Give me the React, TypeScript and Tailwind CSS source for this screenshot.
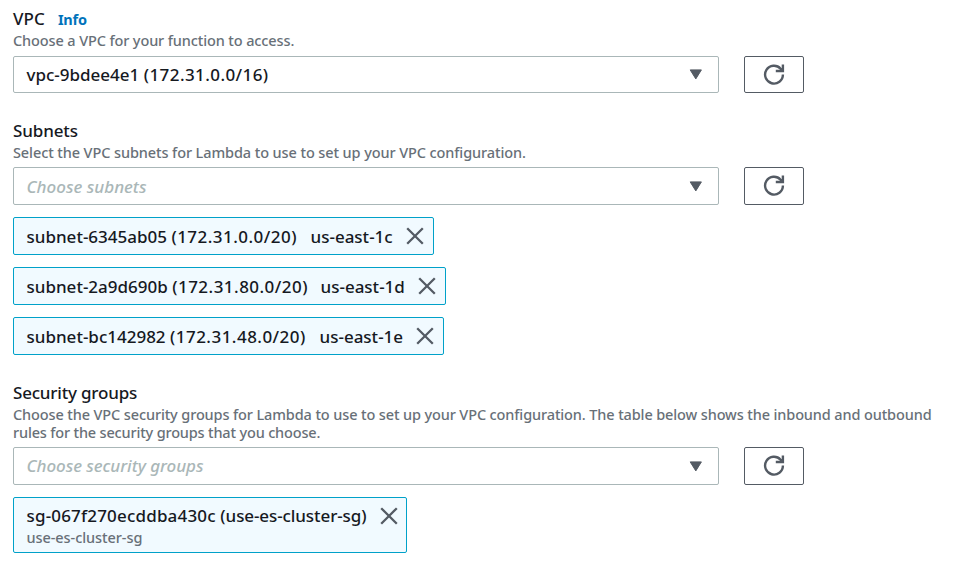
import type { ReactNode } from "react";

function RefreshButton() {
  return (
    <button
      aria-label="Refresh"
      className="flex h-full w-[60px] items-center justify-center rounded-[2px] border border-[#545b64] bg-white"
    >
      <svg width="22" height="22" viewBox="0 0 22 22" fill="none" stroke="#545b64" strokeWidth="2.4">
        <path d="M19.9 10.6A8.9 8.9 0 1 1 17.6 4.7L19 6.3" />
        <path d="M19.9 .6V7H12.8" />
        <path d="M19.9 3V7H15.5Z" fill="#545b64" stroke="none" />
      </svg>
    </button>
  );
}

function SelectRow({ children, height }: { children: ReactNode; height: string }) {
  return (
    <div className={`flex gap-[25px] ${height}`}>
      <div className="flex w-[706px] items-center justify-between rounded-[2px] border border-[#aab7b8] bg-white pr-4 pl-[12.5px] text-[17px]">
        {children}
        <svg width="13" height="11" viewBox="0 0 13 11" fill="#545b64" stroke="#545b64" strokeLinejoin="round">
          <path d="M1.2.9H12.4L6.8 9.9Z" />
        </svg>
      </div>
      <RefreshButton />
    </div>
  );
}

function CloseIcon() {
  return (
    <svg className="shrink-0" width="18" height="18" viewBox="0 0 18 18" stroke="#545b64" strokeWidth="2.3">
      <path d="M1.2 1.2 16.8 16.8M16.8 1.2 1.2 16.8" />
    </svg>
  );
}

const subnets = [
  { id: "subnet-6345ab05", cidr: "(172.31.0.0/20)", zone: "us-east-1c", box: "w-[421px]", text: "w-[284px]" },
  { id: "subnet-2a9d690b", cidr: "(172.31.80.0/20)", zone: "us-east-1d", box: "w-[433px]", text: "w-[294px]" },
  { id: "subnet-bc142982", cidr: "(172.31.48.0/20)", zone: "us-east-1e", box: "w-[431px]", text: "w-[293px]" },
];

export default function App() {
  return (
    <main className="h-[570px] w-[968px] overflow-hidden bg-white pt-2 pl-[13px] font-['Noto_Sans',sans-serif] font-medium whitespace-nowrap text-[#16191f]">
      <section className="h-[112px]">
        <h2 className="flex h-[22px] items-center gap-[13px] text-[17px] leading-[22px]">
          <span className="tracking-[0.1px]">VPC</span>
          <a className="text-[14.5px] font-bold tracking-[-0.2px] text-[#0073bb]">Info</a>
        </h2>
        <p className="h-[26px] text-[14.5px] leading-[20px] tracking-[-0.12px] text-[#687078]">
          Choose a VPC for your function to access.
        </p>
        <SelectRow height="h-[37px]">
          <span>
            vpc-9bdee4e1 <span className="tracking-[0.42px]">(172.31.0.0/16)</span>
          </span>
        </SelectRow>
      </section>

      <section className="h-[262px]">
        <h2 className="h-[22px] text-[17px] leading-[22px] tracking-[-0.14px]">Subnets</h2>
        <p className="h-[25px] text-[14.5px] leading-[20px] tracking-[-0.1px] text-[#687078]">
          Select the VPC subnets for Lambda to use to set up your VPC configuration.
        </p>
        <SelectRow height="h-[38px]">
          <span className="pt-px text-[#aab7b8] italic">Choose subnets</span>
        </SelectRow>
        <ul className="mt-3 flex flex-col gap-3">
          {subnets.map((s) => (
            <li
              key={s.id}
              className={`flex h-[38px] items-center rounded-[2px] border border-[#00a1c9] bg-[#f1faff] pr-[9px] pl-[12.5px] text-[17px] ${s.box}`}
            >
              <span className={`pt-[2px] ${s.text}`}>
                {s.id} <span className="tracking-[0.47px]">{s.cidr}</span>
              </span>
              <span className="flex-1 pt-[2px]">{s.zone}</span>
              <CloseIcon />
            </li>
          ))}
        </ul>
      </section>

      <section>
        <h2 className="h-[22px] text-[17px] leading-[22px] tracking-[-0.2px]">Security groups</h2>
        <div className="flex h-[43px] flex-col pt-px text-[14.5px] leading-[18px] text-[#687078]">
          <p className="tracking-[-0.123px]">
            Choose the VPC security groups for Lambda to use to set up your VPC configuration. The table below shows the inbound and outbound
          </p>
          <p className="tracking-[-0.17px]">rules for the security groups that you choose.</p>
        </div>
        <SelectRow height="h-[38px]">
          <span className="tracking-[-0.05px] text-[#aab7b8] italic">Choose security groups</span>
        </SelectRow>
        <div className="mt-3 flex h-[56px] w-[394px] justify-between rounded-[2px] border border-[#00a1c9] bg-[#f1faff] pt-[7px] pr-2 pl-[12.5px]">
          <div className="-mt-px">
            <div className="h-[23px] text-[17px] leading-[23px]">
              <span className="tracking-[0.18px]">sg-067f270ecddba430c </span>
              <span className="tracking-[-0.09px]">(use-es-cluster-sg)</span>
            </div>
            <div className="text-[14.5px] leading-[20px] tracking-[-0.07px] text-[#687078]">use-es-cluster-sg</div>
          </div>
          <div className="pt-[2px]">
            <CloseIcon />
          </div>
        </div>
      </section>
    </main>
  );
}
